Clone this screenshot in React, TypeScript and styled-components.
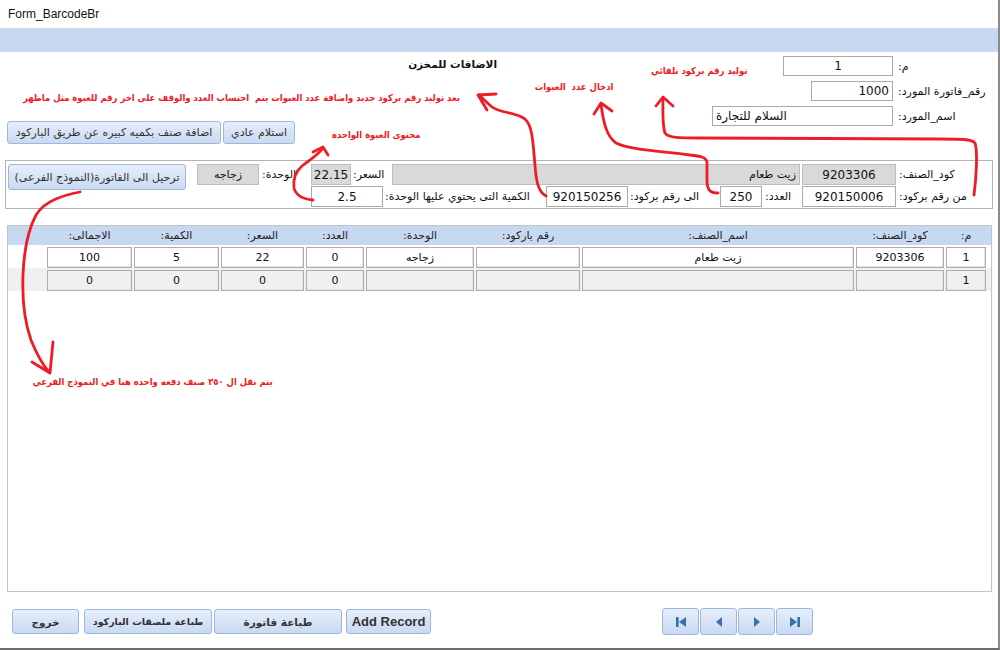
import React from 'react';
import styled, { createGlobalStyle } from 'styled-components';

const AR = `"DejaVu Sans", "Noto Sans", sans-serif`;
const LAT = `"Liberation Sans", Arial, sans-serif`;

const GlobalStyle = createGlobalStyle`
  html, body { margin: 0; padding: 0; background: #fff; }
  body { font-family: ${AR}; }
  * { box-sizing: border-box; }
`;

const Frame = styled.div`
  position: relative;
  width: 1000px;
  height: 650px;
  border-right: 2px solid #8c8c8c;
  border-bottom: 2px solid #6e6e6e;
  background: #fff;
  overflow: hidden;
  display: flex;
  flex-direction: column;
`;

const TitleBar = styled.div`
  height: 28px;
  flex: none;
  display: flex;
  align-items: center;
  padding-left: 8px;
  font-family: ${LAT};
  font-size: 12px;
  color: #111;
`;

const Band = styled.div`
  height: 24px;
  flex: none;
  background: #c6d9f0;
`;

const Header = styled.div`
  display: flex;
  height: 98px;
  flex: none;
  padding-top: 4px;
`;

const HeaderLeft = styled.div`
  width: 712px;
  padding-left: 7px;
  display: flex;
  flex-direction: column;
`;

const FormTitle = styled.div`
  margin-left: 408px;
  width: 82px;
  height: 16px;
  line-height: 16px;
  font-family: ${AR};
  font-weight: bold;
  font-size: 10.5px;
  color: #111;
  direction: rtl;
  text-align: right;
  white-space: nowrap;
`;

const ButtonRow = styled.div`
  margin-top: auto;
  margin-bottom: 6px;
  display: flex;
  gap: 2px;
`;

const Btn = styled.div<{ $w: number; $h?: number; $bold?: boolean; $latin?: boolean; $mt?: number; $ml?: number; $size?: number }>`
  width: ${p => p.$w}px;
  height: ${p => p.$h ?? 23}px;
  margin-top: ${p => p.$mt ?? 0}px;
  margin-left: ${p => p.$ml ?? 0}px;
  flex: none;
  background: linear-gradient(#e6eefa, #c8daf2);
  border: 1px solid #9db8dd;
  border-radius: 3px;
  display: flex;
  align-items: center;
  justify-content: center;
  font-family: ${p => (p.$latin ? LAT : AR)};
  font-size: ${p => p.$size ?? (p.$latin ? 13 : 11)}px;
  font-weight: ${p => (p.$bold ? 'bold' : 'normal')};
  color: #333;
  direction: rtl;
  white-space: nowrap;
`;

const HeaderRight = styled.div`
  display: flex;
  flex-direction: column;
  gap: 5px;
`;

const FieldRow = styled.div`
  display: grid;
  grid-template-columns: 181px auto;
  align-items: center;
  column-gap: 3px;
  height: 20px;
`;

const Field = styled.div<{ $w: number; $align?: 'left' | 'center' | 'right'; $gray?: boolean; $h?: number; $size?: number }>`
  width: ${p => p.$w}px;
  height: ${p => p.$h ?? 20}px;
  justify-self: end;
  flex: none;
  border: 1px solid ${p => (p.$gray ? '#bcbcbc' : '#a9a9a9')};
  background: ${p => (p.$gray ? '#d9d9d9' : '#fff')};
  display: flex;
  align-items: center;
  justify-content: ${p => (p.$align === 'left' ? 'flex-start' : p.$align === 'right' ? 'flex-end' : 'center')};
  padding: 0 3px;
  font-family: ${AR};
  font-size: ${p => p.$size ?? 12}px;
  color: #111;
  white-space: nowrap;
  overflow: hidden;
`;

const Rtl = styled.span`
  direction: rtl;
  unicode-bidi: isolate;
`;

const Label = styled.div<{ $w?: number; $pl?: number }>`
  ${p => (p.$w ? `width: ${p.$w}px;` : '')}
  flex: none;
  padding-left: ${p => p.$pl ?? 2}px;
  font-family: ${AR};
  font-size: 11px;
  color: #111;
  direction: rtl;
  text-align: left;
  white-space: nowrap;
  overflow: visible;
`;

const Group = styled.div`
  margin: 10px 0 0 5px;
  width: 988px;
  height: 49px;
  flex: none;
  border: 1px solid #b4b4b4;
  display: flex;
  padding: 3px 0 0 2px;
`;

const GroupRows = styled.div`
  margin-left: 11px;
  display: flex;
  flex-direction: column;
  gap: 1px;
`;

const GroupRow = styled.div<{ $indent?: number }>`
  display: flex;
  align-items: center;
  height: 21px;
  padding-left: ${p => p.$indent ?? 0}px;
`;

const Gap = styled.div<{ $w: number }>`
  width: ${p => p.$w}px;
  flex: none;
`;

const Sub = styled.div`
  margin: 16px 0 0 7px;
  width: 985px;
  height: 367px;
  flex: none;
  border: 1px solid #c4c4c4;
`;

const cols = '85px 85px 83px 58px 108px 104px 272px 88px 40px';

const SubHeader = styled.div`
  height: 19px;
  background: #c6d9f0;
  display: grid;
  grid-template-columns: ${cols};
  column-gap: 2px;
  padding-left: 39px;
  align-items: center;
`;

const HeadCell = styled.div`
  font-family: ${AR};
  font-size: 11px;
  color: #222;
  text-align: center;
  direction: rtl;
  white-space: nowrap;
`;

const SubRow = styled.div<{ $alt?: boolean }>`
  height: 23px;
  padding-top: 2px;
  background: ${p => (p.$alt ? '#f0f0f0' : '#fff')};
  display: grid;
  grid-template-columns: ${cols};
  column-gap: 2px;
  padding-left: 39px;
`;

const Cell = styled.div<{ $alt?: boolean }>`
  height: 21px;
  border: 1px solid #adadad;
  box-shadow: inset -1px -1px 0 #e4e4e4;
  background: ${p => (p.$alt ? '#f0f0f0' : '#fff')};
  display: flex;
  align-items: center;
  justify-content: center;
  font-family: ${AR};
  font-size: 11px;
  color: #111;
  direction: rtl;
  white-space: nowrap;
`;

const BottomBar = styled.div`
  margin-top: 16px;
  display: flex;
  align-items: flex-start;
  padding-left: 12px;
`;

const Nav = styled.div`
  display: flex;
  gap: 1px;
  margin-left: 231px;
`;

const NavBtn = styled.div`
  width: 37px;
  height: 27px;
  background: linear-gradient(#e6eefa, #c8daf2);
  border: 1px solid #9db8dd;
  border-radius: 3px;
  display: flex;
  align-items: center;
  justify-content: center;
`;

const Overlay = styled.svg`
  position: absolute;
  left: 0;
  top: 0;
  width: 1000px;
  height: 650px;
  pointer-events: none;
`;

const Note = styled.div<{ $right: number; $top: number; $size?: number }>`
  position: absolute;
  right: ${p => 1000 - p.$right}px;
  top: ${p => p.$top}px;
  font-family: ${AR};
  font-weight: bold;
  font-size: ${p => p.$size ?? 9.5}px;
  line-height: 14px;
  color: #ee1c25;
  direction: rtl;
  white-space: pre;
  pointer-events: none;
  transform: scaleX(0.89);
  transform-origin: right center;
`;

const NAV_COLOR = '#3c6fa7';

const FirstIcon = () => (
  <svg width="12" height="12" viewBox="0 0 12 12">
    <rect x="1" y="1" width="2.6" height="10" fill={NAV_COLOR} />
    <polygon points="11,1 11,11 4,6" fill={NAV_COLOR} />
  </svg>
);
const PrevIcon = () => (
  <svg width="12" height="12" viewBox="0 0 12 12">
    <polygon points="9,1 9,11 3,6" fill={NAV_COLOR} />
  </svg>
);
const NextIcon = () => (
  <svg width="12" height="12" viewBox="0 0 12 12">
    <polygon points="3,1 3,11 9,6" fill={NAV_COLOR} />
  </svg>
);
const LastIcon = () => (
  <svg width="12" height="12" viewBox="0 0 12 12">
    <polygon points="1,1 1,11 8,6" fill={NAV_COLOR} />
    <rect x="8.4" y="1" width="2.6" height="10" fill={NAV_COLOR} />
  </svg>
);

const rows = [
  { alt: false, cells: ['100', '5', '22', '0', 'زجاجه', '', 'زيت طعام', '9203306', '1'] },
  { alt: true, cells: ['0', '0', '0', '0', '', '', '', '', '1'] },
];

const heads = ['الاجمالى:', 'الكمية:', 'السعر:', 'العدد:', 'الوحدة:', 'رقم باركود:', 'اسم_الصنف:', 'كود_الصنف:', 'م:'];

const RED = '#ee1c25';

export default function App() {
  return (
    <>
      <GlobalStyle />
      <Frame>
        <TitleBar>Form_BarcodeBr</TitleBar>
        <Band />
        <Header>
          <HeaderLeft>
            <FormTitle>الاضافات للمخزن</FormTitle>
            <ButtonRow>
              <Btn $w={214}>اضافة صنف بكميه كبيره عن طريق الباركود</Btn>
              <Btn $w={72}>استلام عادي</Btn>
            </ButtonRow>
          </HeaderLeft>
          <HeaderRight>
            <FieldRow>
              <Field $w={110}>1</Field>
              <Label>م:</Label>
            </FieldRow>
            <FieldRow>
              <Field $w={82} $align="right">1000</Field>
              <Label>رقم_فاتورة المورد:</Label>
            </FieldRow>
            <FieldRow>
              <Field $w={181} $align="left"><Rtl>السلام للتجارة</Rtl></Field>
              <Label>اسم_المورد:</Label>
            </FieldRow>
          </HeaderRight>
        </Header>

        <Group>
          <Btn $w={178} $h={26}>ترحيل الى الفاتورة(النموذج الفرعى)</Btn>
          <GroupRows>
            <GroupRow>
              <Field $w={62} $h={21} $gray $size={11}><Rtl>زجاجه</Rtl></Field>
              <Label $w={52} $pl={3}>الوحدة:</Label>
              <Field $w={40} $h={21} $gray>22.15</Field>
              <Label $w={41} $pl={2}>السعر:</Label>
              <Field $w={408} $h={21} $gray $align="right" $size={11}><Rtl>زيت طعام</Rtl></Field>
              <Gap $w={2} />
              <Field $w={94} $h={21} $gray>9203306</Field>
              <Label $pl={3}>كود_الصنف:</Label>
            </GroupRow>
            <GroupRow $indent={114}>
              <Field $w={72} $h={21}>2.5</Field>
              <Label $w={163} $pl={2}>الكمية التى يحتوي عليها الوحدة:</Label>
              <Field $w={82} $h={21}>920150256</Field>
              <Label $w={92} $pl={2}>الى رقم بركود:</Label>
              <Field $w={42} $h={21}>250</Field>
              <Label $w={40} $pl={3}>العدد:</Label>
              <Field $w={94} $h={21}>920150006</Field>
              <Label $pl={3}>من رقم بركود:</Label>
            </GroupRow>
          </GroupRows>
        </Group>

        <Sub>
          <SubHeader>
            {heads.map(h => (
              <HeadCell key={h}>{h}</HeadCell>
            ))}
          </SubHeader>
          {rows.map((r, i) => (
            <SubRow key={i} $alt={r.alt}>
              {r.cells.map((c, j) => (
                <Cell key={j} $alt={r.alt}>{c}</Cell>
              ))}
            </SubRow>
          ))}
        </Sub>

        <BottomBar>
          <Btn $w={67} $h={25} $bold $size={10.5} $mt={1}>خروج</Btn>
          <Btn $w={128} $h={25} $bold $size={9.5} $mt={1} $ml={5}>طباعة ملصقات الباركود</Btn>
          <Btn $w={128} $h={25} $bold $size={10.5} $mt={1} $ml={2}>طباعة فاتورة</Btn>
          <Btn $w={85} $h={25} $bold $latin $mt={1} $ml={4}>Add Record</Btn>
          <Nav>
            <NavBtn><FirstIcon /></NavBtn>
            <NavBtn><PrevIcon /></NavBtn>
            <NavBtn><NextIcon /></NavBtn>
            <NavBtn><LastIcon /></NavBtn>
          </Nav>
        </BottomBar>

        <Note $right={749} $top={64}>توليد رقم بركود تلقائي</Note>
        <Note $right={615} $top={80}>{'ادخال عدد  العبوات'}</Note>
        <Note $right={462} $top={91}>{'بعد توليد رقم بركود جديد واضافة عدد العبوات يتم  احتساب العدد والوقف على اخر رقم للعبوة مثل ماظهر'}</Note>
        <Note $right={422} $top={128}>محتوى العبوة الواحده</Note>
        <Note $right={275} $top={375}>يتم نقل ال ٢٥٠ صنف دفعه واحده هنا في النموذج الفرعي</Note>

        <Overlay viewBox="0 0 1000 650">
          <g fill="none" stroke={RED} strokeWidth={2.8} strokeLinecap="round" strokeLinejoin="round">
            <path d="M974,195 C976,180 978,152 975,143 C972,139 960,139 940,139 L700,138 C680,138 668,138 665,133 C662,124 663,110 663,98" />
            <path d="M656,106 L663,97 L673,106" />
            <path d="M718,193 C710,193 707,190 707,180 L707,162 C706,157 700,156 690,155 C660,151 630,150 616,143 C606,136 603,120 601,104" />
            <path d="M594,114 L601,103 L612,111" />
            <path d="M546,196 C538,192 536,180 535,165 C533,145 533,126 525,119 C515,112 500,113 492,107 C486,102 482,98 479,95" />
            <path d="M496,94 L478,95 L487,110" />
            <path d="M313,200 C303,199 296,196 294,188 C293,180 295,172 302,166 C311,159 318,155 323,148" />
            <path d="M313,152 L323,147 L328,155" />
            <path d="M80,192 C65,195 45,200 36,215 C28,230 24,250 23,275 C22,300 24,320 31,340 C37,355 43,365 49,372" />
            <path d="M32,362 L50,373 L53,342" />
          </g>
        </Overlay>
      </Frame>
    </>
  );
}
